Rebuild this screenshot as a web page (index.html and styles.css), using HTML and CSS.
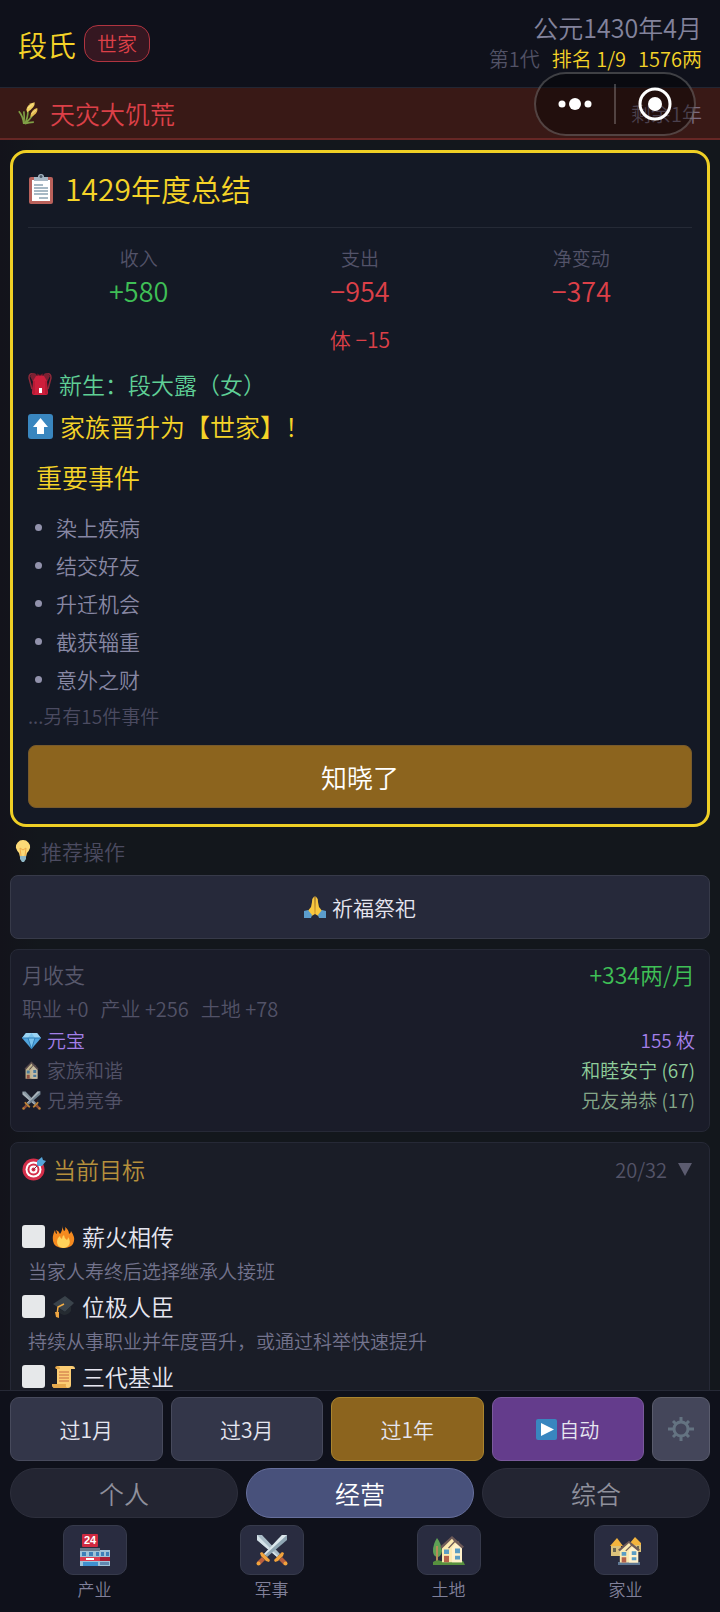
FILE: index.html
```html
<!DOCTYPE html>
<html lang="zh-CN">
<head>
  <meta charset="UTF-8" />
  <meta name="viewport" content="width=device-width, initial-scale=1.0"/>
  <title>段氏 世家</title>
  <link rel="stylesheet" href="styles.css">
</head>
<body>

  <!-- Shared icons -->
  <svg class="defs" aria-hidden="true">
    <symbol id="swords" viewBox="0 0 32 32">
      <path d="M1 1h5l18 19-3 3L1 6z" fill="#a9bcc7"/>
      <path d="M1 1l21 21-1 1L1 6z" fill="#d5e2e8"/>
      <path d="M31 1h-5L8 20l3 3L31 6z" fill="#8fa6b3"/>
      <path d="M26 1L8 20l1 1L31 1z" fill="#dce7ec"/>
      <path d="M4 19l2-1 8 8-1 2-3-1-5-5z" fill="#f2a33c"/>
      <path d="M28 19l-2-1-8 8 1 2 3-1 5-5z" fill="#f2a33c"/>
      <path d="M6 23l3 3-5 5-3-3z" fill="#b85f3e"/>
      <path d="M26 23l-3 3 5 5 3-3z" fill="#b85f3e"/>
      <circle cx="2.500" cy="29.500" r="2" fill="#f2a33c"/>
      <circle cx="29.500" cy="29.500" r="2" fill="#f2a33c"/>
    </symbol>
    <symbol id="house" viewBox="0 0 24 32">
      <path d="M2 13L12 3l10 10v17H2z" fill="#fbe9b0"/>
      <path d="M12 14l6-7 4 6v17H12z" fill="#fff1cb"/>
      <path d="M0 13L12 1l12 12-2 2-7-7-6 7-1-1 6-7-2-3L2 15z" fill="#6d5a58"/>
      <path d="M4 16h5v5H4zM15 15h5v5h-5zM15 23h5v4h-5z" fill="#5b9dc4"/>
      <path d="M4 23h5v7H4z" fill="#b5614a"/>
    </symbol>
  </svg>

  <header class="header">
    <div class="family">
      <h1 class="family-name">段氏</h1>
      <span class="rank-badge">世家</span>
    </div>
    <div class="status">
      <div class="date">公元1430年4月</div>
      <div class="status-line">
        <span class="generation">第1代</span>
        <span>排名 1/9</span>
        <span>1576两</span>
      </div>
    </div>
    <div class="capsule">
      <button class="capsule-btn" aria-label="更多">
        <svg width="34" height="14" viewBox="0 0 34 14" fill="#fff"><circle cx="4" cy="7" r="3.500"/><circle cx="17" cy="7" r="6"/><circle cx="30" cy="7" r="3.500"/></svg>
      </button>
      <button class="capsule-btn" aria-label="关闭">
        <svg width="34" height="34" viewBox="0 0 34 34"><circle cx="17" cy="17" r="15" fill="none" stroke="#fff" stroke-width="3"/><circle cx="17" cy="17" r="7" fill="#fff"/></svg>
      </button>
    </div>
  </header>

  <div class="disaster">
    <svg class="disaster-icon" viewBox="0 0 24 28" fill="none">
      <path d="M7 27Q6 18 1 12M7 27Q8 18 7 12M8 27Q12 20 12 10M8 27Q14 22 18 16M8 27Q13 25 19 25" stroke="#7f9f45" stroke-width="2"/>
      <path d="M10 10Q11 3 20 1Q21 7 11 13z" fill="#f0cf63"/>
      <path d="M15 17Q16 10 23 8Q25 14 15 19z" fill="#e3bb50"/>
      <path d="M12 8l6-5M16 15l6-5" stroke="#fbe79a" stroke-width="1"/>
    </svg>
    <span class="disaster-name">天灾大饥荒</span>
    <span class="disaster-left">剩余1年</span>
  </div>

  <main class="main">
    <section class="summary">
      <h2 class="summary-title">
        <svg width="26" height="30" viewBox="0 0 26 30"><rect x="1" y="3" width="24" height="27" rx="2" fill="#b9615b"/><path d="M4 6h18v21H4z" fill="#fff"/><path d="M6 3h4a3 3 0 0 1 6 0h4v4H6z" fill="#a7b7c4"/><circle cx="13" cy="2.500" r="1.500" fill="#4c5b69"/><path d="M6 11h9M6 14h14M6 17h14M6 20h14M11 24h9" stroke="#8aa3b3" stroke-width="1.500"/></svg>
        1429年度总结
      </h2>
      <div class="stats">
        <div class="stat"><span class="stat-label">收入</span><span class="stat-value up">+580</span></div>
        <div class="stat"><span class="stat-label">支出</span><span class="stat-value down">−954</span></div>
        <div class="stat"><span class="stat-label">净变动</span><span class="stat-value down">−374</span></div>
      </div>
      <p class="body-change down">体 −15</p>
      <p class="birth">
        <svg width="24" height="24" viewBox="0 0 24 24"><path d="M5 2Q1 1 1 6l3 11M19 2q4-1 4 4l-3 11" fill="none" stroke="#8f2a3a" stroke-width="1.500"/><path d="M5 1q4 0 4 4l-4 5-3-6zM19 1q-4 0-4 4l4 5 3-6z" fill="#7d2032"/><path d="M8 4q4-2 8 0l3 5 1 12q0 2-2 2H6q-2 0-2-2L5 9z" fill="#cd1f3c"/><path d="M9 2q3 3 6 0" fill="none" stroke="#711627" stroke-width="1"/><path d="M6 9v13M18 9v13" stroke="#a3162f" stroke-width="1"/><path d="M11 16h3v5h-3z" fill="#fff"/></svg>
        新生：段大露（女）
      </p>
      <p class="promotion">
        <svg width="25" height="25" viewBox="0 0 25 25"><rect width="25" height="25" rx="3" fill="#3986bf"/><path d="M12.500 4L20 13h-4v7H9v-7H5z" fill="#fff"/></svg>
        家族晋升为【世家】！
      </p>
      <h3 class="events-title">重要事件</h3>
      <ul class="events">
        <li>染上疾病</li>
        <li>结交好友</li>
        <li>升迁机会</li>
        <li>截获辎重</li>
        <li>意外之财</li>
      </ul>
      <p class="events-more">...另有15件事件</p>
      <button class="confirm-btn">知晓了</button>
    </section>

    <h3 class="hint-title">
      <svg width="20" height="22" viewBox="0 0 20 22"><path d="M10 0a7 7 0 0 1 7 8q-1 3-3 5l-1 4H7l-1-4Q4 11 3 8a7 7 0 0 1 7-8z" fill="#fbd977"/><path d="M8 16L7 8l3 2 3-2-1 8" fill="none" stroke="#efaa48" stroke-width="1"/><path d="M7 16h6v3l-2 3H9l-2-3z" fill="#8eb6c5"/></svg>
      推荐操作
    </h3>
    <button class="hint-btn">
      <svg width="22" height="22" viewBox="0 0 22 22"><path d="M10.500 0Q8 2 8 6L7 11l-4 5 3 5 5-3zM11.500 0Q14 2 14 6l1 5 4 5-3 5-5-3z" fill="#f9c83f"/><path d="M11 1v17" stroke="#d99a28" stroke-width="1"/><path d="M0 15l4-1 4 5-1 3H0zM22 15l-4-1-4 5 1 3h7z" fill="#5b9dcc"/></svg>
      祈福祭祀
    </button>

    <section class="card income">
      <div class="row">
        <span class="income-title">月收支</span>
        <span class="income-total up">+334两/月</span>
      </div>
      <div class="income-parts"><span>职业 +0</span><span>产业 +256</span><span>土地 +78</span></div>
      <div class="row small gem">
        <span class="row-name"><svg width="19" height="19" viewBox="0 0 19 19"><path d="M4 2h11l4 5-9.500 11L0 7z" fill="#51a5de"/><path d="M4 2h11l4 5H0z" fill="#9bd4f3"/><path d="M6 7l3.500-5L13 7l-3.500 11z" fill="#79c2ec"/><path d="M0 7h19M6 7l3.500 11L13 7" fill="none" stroke="#2f7fb8" stroke-width="1"/></svg>元宝</span>
        <span>155 枚</span>
      </div>
      <div class="row small">
        <span class="row-name"><svg class="faded" width="19" height="19" viewBox="0 0 24 32"><use href="#house"/></svg>家族和谐</span>
        <span class="harmony">和睦安宁 (67)</span>
      </div>
      <div class="row small">
        <span class="row-name"><svg class="faded" width="19" height="19"><use href="#swords"/></svg>兄弟竞争</span>
        <span class="rivalry">兄友弟恭 (17)</span>
      </div>
    </section>

    <section class="card goals">
      <div class="row goals-head">
        <h3 class="goals-title">
          <svg width="24" height="24" viewBox="0 0 24 24"><circle cx="11.500" cy="12.500" r="11" fill="#d52f4a"/><circle cx="11.500" cy="12.500" r="8" fill="#fff"/><circle cx="11.500" cy="12.500" r="6" fill="#d52f4a"/><circle cx="11.500" cy="12.500" r="4" fill="#fff"/><circle cx="11.500" cy="12.500" r="2" fill="#d52f4a"/><path d="M11 13l8-8" stroke="#7a3140" stroke-width="1"/><path d="M15 8V4l5-4 1 3 3 1-4 5h-4z" fill="#55a5d9"/></svg>
          当前目标
        </h3>
        <button class="goals-toggle">20/32 <svg width="14" height="13" viewBox="0 0 14 13"><path d="M0 0h14L7 13z" fill="#5c5c70"/></svg></button>
      </div>
      <ul class="goal-list">
        <li>
          <label class="goal"><input type="checkbox">
            <svg width="23" height="23" viewBox="0 0 23 23"><path d="M10 0Q10 3 12 6q2-1 1-4 4 3 4 7 2-1 2-3 4 6 3 10-1 7-10.500 7T1 16Q0 11 3 5q0 3 2 4 0-2-1-4 3 1 4 4Q11 5 10 0z" fill="#f58a1f"/><path d="M5 17q0-4 3-6 0 2 2 3 0-3 2-4 0 3 3 5 1-1 1-3 3 4 1 8-2 3-6 3-6-1-6-6z" fill="#ffd25a"/></svg>
            薪火相传</label>
          <p class="goal-desc">当家人寿终后选择继承人接班</p>
        </li>
        <li>
          <label class="goal"><input type="checkbox">
            <svg width="23" height="23" viewBox="0 0 23 23"><path d="M1 9L13 1l9 7-9 9z" fill="#3a434b"/><path d="M6 13l7 4 6-6v5q-3 4-7 4-4-1-6-4z" fill="#252b31"/><path d="M12 9L6 12l-1 8" fill="none" stroke="#f3ad45" stroke-width="1.500"/><path d="M3 17h4v6l-3-1z" fill="#eda542"/></svg>
            位极人臣</label>
          <p class="goal-desc">持续从事职业并年度晋升，或通过科举快速提升</p>
        </li>
        <li>
          <label class="goal"><input type="checkbox">
            <svg width="23" height="23" viewBox="0 0 23 23"><path d="M5 1h15q3 0 3 3h-4v16q0 3-3 3H3q-3 0-3-4h5z" fill="#fbcd74"/><path d="M5 1q3 0 3 3H4Q2 2 5 1zM0 19h14q-1 4 3 4H3q-3 0-3-4z" fill="#e6a94c"/><path d="M7 7h10M7 10h10M7 13h10M7 16h10" stroke="#c76b43" stroke-width="1"/></svg>
            三代基业</label>
        </li>
      </ul>
    </section>
  </main>

  <footer class="footer">
    <div class="actions">
      <button class="action">过1月</button>
      <button class="action">过3月</button>
      <button class="action gold">过1年</button>
      <button class="action purple"><svg width="21" height="21" viewBox="0 0 21 21"><rect width="21" height="21" rx="2" fill="#3986bf"/><path d="M5 4l13 6.500L5 17z" fill="#fff"/></svg>自动</button>
      <button class="action gear" aria-label="设置">
        <svg width="26" height="26" viewBox="0 0 26 26" fill="none" stroke="#647381"><circle cx="13" cy="13" r="7" stroke-width="3"/><path d="M13 1v5M13 20v5M0 13h6M20 13h6M5 5l3 3M18 18l3 3M21 5l-3 3M8 18l-3 3" stroke-width="3"/></svg>
      </button>
    </div>
    <nav class="tabs">
      <button class="tab">个人</button>
      <button class="tab active">经营</button>
      <button class="tab">综合</button>
    </nav>
    <nav class="menu">
      <a class="menu-item" href="#estate">
        <span class="menu-icon"><svg width="32" height="32" viewBox="0 0 32 32"><rect x="3" y="0" width="16" height="13" rx="1" fill="#cf2940"/><text class="store-sign" x="11" y="10" text-anchor="middle">24</text><path d="M1 14h20v2h10v16H1z" fill="#9fc3d8"/><path d="M1 14h20v3H1z" fill="#67788a"/><path d="M3 18h4v4H3zM10 18h4v4h-4zM17 18h3v4h-3zM22 18h3v4h-3zM27 18h3v4h-3z" fill="#3e80b8"/><path d="M1 23h20v4H1z" fill="#dc3c50"/><path d="M21 23h10v4H21z" fill="#a81f35"/><path d="M7 24h8v2H7z" fill="#fff"/><path d="M4 28h15v4H4z" fill="#3f91cf"/><path d="M21 28h9v3h-9z" fill="#6089b0"/></svg></span>
        <span>产业</span>
      </a>
      <a class="menu-item" href="#army">
        <span class="menu-icon"><svg width="32" height="32"><use href="#swords"/></svg></span>
        <span>军事</span>
      </a>
      <a class="menu-item" href="#land">
        <span class="menu-icon"><svg width="32" height="32" viewBox="0 0 32 32"><path d="M4 4Q0 10 0 17q0 5 4 6 4 0 5-6-1-8-5-13z" fill="#5fa155"/><path d="M4 12v17" stroke="#b98b58" stroke-width="2"/><path d="M0 28q4-3 8-1h22l2 4H0z" fill="#57913f"/><svg x="7" y="1" width="24" height="29" preserveAspectRatio="none" viewBox="0 0 24 32"><use href="#house" width="24" height="32"/></svg></svg></span>
        <span>土地</span>
      </a>
      <a class="menu-item" href="#home">
        <span class="menu-icon"><svg width="32" height="32" viewBox="0 0 32 32"><path d="M1 12h10v10H1zM22 10h9v8h-9z" fill="#dcc27a"/><path d="M0 12l7-8 6 8zM20 9l5-6 6 6v2H20z" fill="#f3b43e"/><path d="M3 14h3v4H3zM27 12h2v3h-2z" fill="#6a6652"/><path d="M8 28h22v3H8z" fill="#5f7895"/><svg x="8" y="6" width="22" height="24" preserveAspectRatio="none" viewBox="0 0 24 32"><use href="#house" width="24" height="32"/></svg></svg></span>
        <span>家业</span>
      </a>
    </nav>
  </footer>

</body>
</html>
```
FILE: styles.css
```css
* {
  box-sizing: border-box;
  margin: 0;
  padding: 0;
}

body {
  font-family: "Noto Sans CJK SC", sans-serif;
  font-weight: 350;
  font-size: 19px;
  color: #e6e6f0;
  background: linear-gradient(90deg, #13131b 0, #13171c 40px);
  height: 100vh;
  display: flex;
  flex-direction: column;
  overflow: hidden;
}

button {
  font: inherit;
  color: inherit;
  background: none;
  border: none;
  cursor: pointer;
}

h1, h2, h3 {
  font-weight: inherit;
}

ul {
  list-style: none;
}

svg {
  flex: none;
}

.defs {
  position: absolute;
  width: 0;
  height: 0;
}

.up {
  color: #3fbf56;
}

.down {
  color: #dc4048;
}

/* Header */
.header {
  position: relative;
  flex: none;
  height: 88px;
  padding: 0 18px;
  display: flex;
  justify-content: space-between;
  align-items: center;
  background: #0f111b;
  border-bottom: 1px solid #232633;
}

.family {
  display: flex;
  align-items: center;
  gap: 8px;
}

.family-name {
  font-size: 29px;
  line-height: 40px;
  color: #f5d328;
}

.rank-badge {
  font-size: 20px;
  line-height: 35px;
  padding: 0 12px;
  color: #dc4048;
  background: #351721;
  border: 1px solid #b03440;
  border-radius: 14px;
}

.status {
  padding-bottom: 3px;
  text-align: right;
}

.date {
  font-size: 25px;
  line-height: 34px;
  color: #83839c;
}

.status-line {
  display: flex;
  justify-content: flex-end;
  gap: 12px;
  font-size: 20px;
  line-height: 30px;
  color: #f5d328;
}

.generation {
  color: #525266;
}

/* Floating capsule over the header and the banner */
.capsule {
  position: absolute;
  top: 72px;
  right: 24px;
  z-index: 2;
  width: 162px;
  height: 64px;
  display: flex;
  align-items: center;
  background: rgba(0, 0, 0, 0.4);
  border: 2px solid rgba(255, 255, 255, 0.22);
  border-radius: 32px;
}

.capsule-btn {
  flex: 1;
  height: 40px;
  display: flex;
  align-items: center;
  justify-content: center;
}

.capsule-btn + .capsule-btn {
  border-left: 2px solid rgba(255, 255, 255, 0.22);
}

/* Disaster banner */
.disaster {
  flex: none;
  height: 52px;
  padding: 0 18px;
  display: flex;
  align-items: center;
  background: #391916;
  border-bottom: 2px solid #662725;
}

.disaster-icon {
  width: 20px;
  height: 24px;
  margin-right: 12px;
}

.disaster-name {
  flex: 1;
  font-size: 25px;
  color: #dc4048;
}

.disaster-left {
  font-size: 20px;
  color: #7c6b80;
}

/* Content */
.main {
  flex: 1;
  min-height: 0;
  padding: 10px 10px 0;
  overflow: hidden;
}

.summary {
  padding: 14px 15px 16px;
  background: #141925;
  border: 3px solid #efcf25;
  border-radius: 16px;
}

.summary-title {
  display: flex;
  align-items: center;
  gap: 11px;
  padding-bottom: 17px;
  border-bottom: 1px solid #252a36;
  font-size: 30px;
  line-height: 43px;
  color: #f5d328;
}

.stats {
  display: grid;
  grid-template-columns: repeat(3, 1fr);
  padding: 17px 0 12px;
}

.stat {
  display: flex;
  flex-direction: column;
  align-items: center;
}

.stat-label {
  line-height: 26px;
  color: #535369;
}

.stat-value {
  font-size: 27px;
  line-height: 40px;
}

.body-change {
  font-size: 21px;
  line-height: 32px;
  text-align: center;
}

.birth,
.promotion {
  display: flex;
  align-items: center;
  gap: 7px;
  margin-top: 11px;
  font-size: 23px;
  line-height: 36px;
  color: #5fcf96;
}

.promotion {
  margin-top: 6px;
  font-size: 25px;
  color: #f5d328;
}

.events-title {
  padding: 12px 8px 10px;
  font-size: 26px;
  line-height: 42px;
  color: #f5d328;
}

.events li {
  display: flex;
  align-items: center;
  gap: 14px;
  padding-left: 7px;
  font-size: 21px;
  line-height: 38px;
  color: #8787a3;
}

.events li::before {
  content: "";
  width: 7px;
  height: 7px;
  background: #9292ac;
  border-radius: 50%;
}

.events-more {
  line-height: 36px;
  color: #4b4b61;
}

.confirm-btn {
  width: 100%;
  height: 63px;
  margin-top: 11px;
  font-size: 26px;
  color: #fff;
  background: #8c641e;
  border: 1px solid #785a2c;
  border-radius: 8px;
}

.hint-title {
  display: flex;
  align-items: center;
  gap: 8px;
  padding-left: 3px;
  font-size: 21px;
  line-height: 48px;
  color: #4b4b60;
}

.hint-btn {
  width: 100%;
  height: 64px;
  display: flex;
  align-items: center;
  justify-content: center;
  gap: 6px;
  font-size: 21px;
  background: #26293a;
  border: 1px solid #373a49;
  border-radius: 8px;
}

.card {
  margin-top: 10px;
  padding: 6px 14px 16px 11px;
  background: #1a1c29;
  border: 1px solid #262936;
  border-radius: 8px;
}

.row {
  display: flex;
  justify-content: space-between;
  align-items: center;
}

.income-title {
  font-size: 21px;
  line-height: 36px;
  color: #58586c;
}

.income-total {
  font-size: 23px;
  line-height: 36px;
}

.income-parts {
  display: flex;
  gap: 12px;
  font-size: 20px;
  line-height: 33px;
  color: #525267;
}

.small {
  line-height: 30px;
}

.row-name {
  display: flex;
  align-items: center;
  gap: 6px;
  color: #525267;
}

.gem,
.gem .row-name {
  color: #a37fe8;
}

.faded {
  opacity: 0.75;
}

.harmony {
  color: #8fce9a;
}

.rivalry {
  color: #84a688;
}

/* Goals */
.goals {
  background: #1a1d27;
}

.goals-title {
  display: flex;
  align-items: center;
  gap: 7px;
  font-size: 23px;
  line-height: 40px;
  color: #b5903c;
}

.goals-toggle {
  display: flex;
  align-items: center;
  gap: 11px;
  padding-right: 3px;
  font-size: 20px;
  color: #545468;
}

.goal-list {
  margin-top: 29px;
}

.goal {
  display: flex;
  align-items: center;
  gap: 7px;
  font-size: 23px;
  line-height: 36px;
}

.goal input {
  appearance: none;
  width: 23px;
  height: 23px;
  background: #e6e8ea;
  border-radius: 3px;
}

.goal-desc {
  padding-left: 6px;
  line-height: 34px;
  color: #73738d;
}

/* Bottom controls */
.footer {
  flex: none;
  padding: 6px 10px 10px;
  display: flex;
  flex-direction: column;
  gap: 7px;
  background: #0f111b;
  border-top: 1px solid #262936;
}

.actions,
.tabs {
  display: flex;
  gap: 8px;
}

.action {
  flex: 1;
  height: 64px;
  display: flex;
  align-items: center;
  justify-content: center;
  gap: 2px;
  font-size: 21px;
  background: #333649;
  border: 1px solid #474a5c;
  border-radius: 9px;
}

.gold {
  background: #8c641e;
  border-color: #aa852f;
}

.purple {
  font-size: 20px;
  background: #643c8c;
  border-color: #7a5a9c;
}

.gear {
  flex: 0 0 58px;
  background: #44465a;
  border-color: #5a5c6d;
}

.tab {
  flex: 1;
  height: 50px;
  font-size: 25px;
  color: #8f909c;
  background: #232532;
  border: 1px solid #2d2f3c;
  border-radius: 25px;
}

.active {
  color: #fff;
  background: #48517b;
  border-color: #666f9c;
}

.menu {
  display: grid;
  grid-template-columns: repeat(4, 1fr);
  margin: 0 -4px;
}

.menu-item {
  display: flex;
  flex-direction: column;
  align-items: center;
  font-size: 17px;
  line-height: 27px;
  color: #80809a;
  text-decoration: none;
}

.menu-icon {
  width: 64px;
  height: 50px;
  display: flex;
  align-items: center;
  justify-content: center;
  background: #292c40;
  border: 1px solid #363a4b;
  border-radius: 10px;
}

.store-sign {
  font-family: "Liberation Sans", sans-serif;
  font-size: 11px;
  font-weight: bold;
  fill: #fff;
}
```
